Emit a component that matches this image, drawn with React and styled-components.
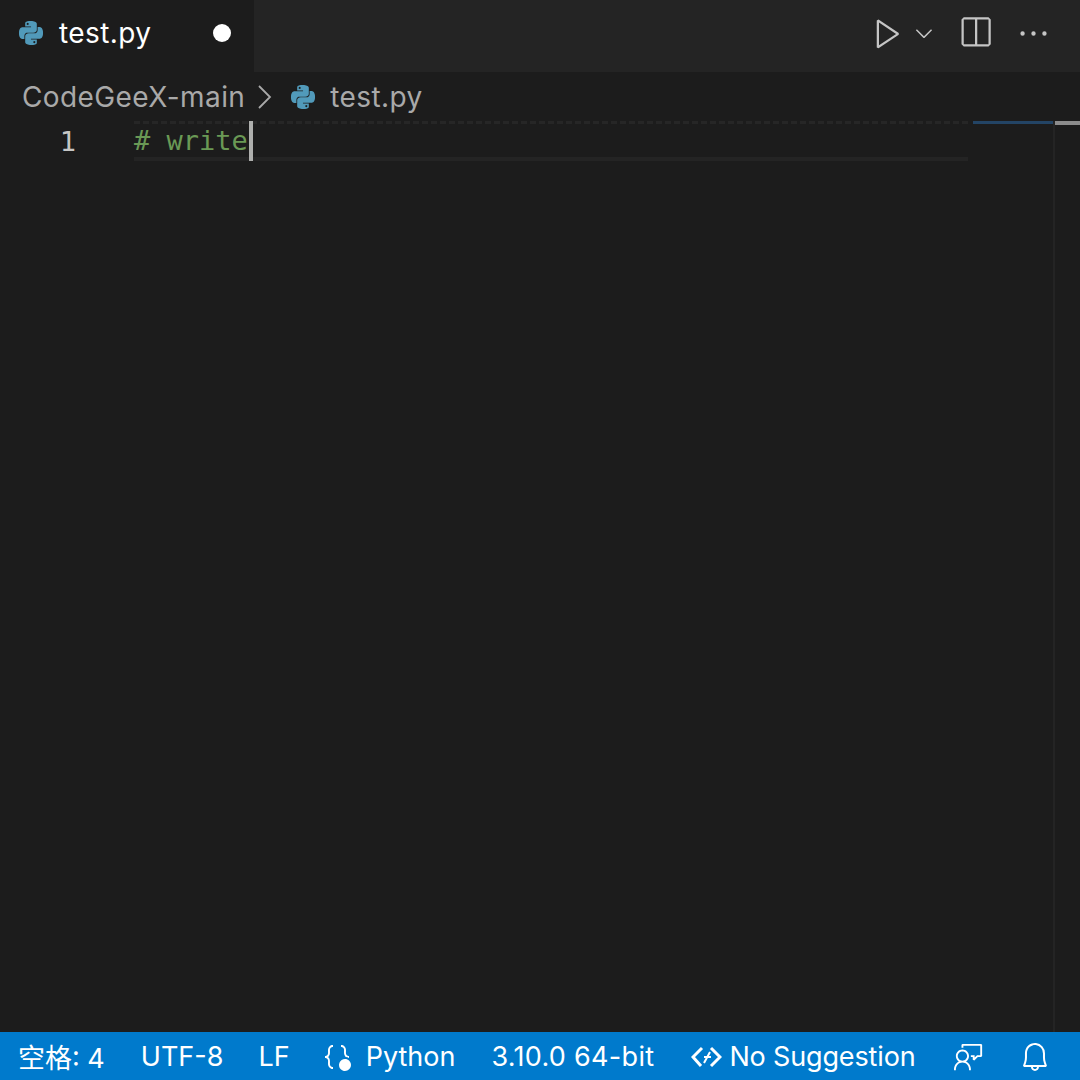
import React from "react";
import styled, { createGlobalStyle } from "styled-components";
import { SiPython } from "react-icons/si";
import {
  VscPlay,
  VscChevronDown,
  VscSplitHorizontal,
  VscEllipsis,
  VscBracketDot,
  VscFeedback,
  VscBell,
} from "react-icons/vsc";

const GlobalStyle = createGlobalStyle`
  html, body {
    margin: 0;
    padding: 0;
    background: #1c1c1c;
  }
  * {
    box-sizing: border-box;
  }
`;

const Window = styled.div`
  width: 1080px;
  height: 1080px;
  display: flex;
  flex-direction: column;
  overflow: hidden;
  background: #1c1c1c;
  font-family: Inter, "Noto Sans CJK SC", sans-serif;
`;

const TabBar = styled.div`
  height: 72px;
  flex: none;
  display: flex;
  justify-content: space-between;
  background: #242424;
`;

const Tab = styled.div`
  width: 254px;
  display: flex;
  align-items: center;
  padding: 0 23px 6px 19px;
  background: #1c1c1c;
  color: #ffffff;
  font-size: 28px;
  letter-spacing: 0.4px;
`;

const FileName = styled.span`
  margin-left: ${(props) => props.$gap}px;
  flex: 1;
`;

const DirtyDot = styled.span`
  width: 18px;
  height: 18px;
  border-radius: 50%;
  background: #ffffff;
`;

const Actions = styled.div`
  display: flex;
  align-items: center;
  padding: 0 29px 6px 0;
  color: #c5c5c5;
`;

const ActionIcon = styled.span`
  display: flex;
  margin-left: ${(props) => props.$left || 0}px;
`;

const Breadcrumb = styled.div`
  height: 49px;
  flex: none;
  display: flex;
  align-items: center;
  padding: 0 0 0 22px;
  color: #a9a9a9;
  font-size: 28px;
  letter-spacing: 0.4px;
`;

const Separator = styled.svg`
  width: 16px;
  height: 26px;
  margin: 0 18px 0 12px;
`;

const Editor = styled.div`
  flex: 1;
  display: flex;
  min-height: 0;
`;

const Gutter = styled.div`
  width: 134px;
  flex: none;
  padding: 0 58px 0 0;
  height: 40px;
  display: flex;
  align-items: center;
  justify-content: flex-end;
  color: #c6c6c6;
  font-family: "DejaVu Sans Mono", monospace;
  font-size: 27px;
`;

const CodeArea = styled.div`
  width: 834px;
  flex: none;
`;

const CurrentLine = styled.div`
  height: 40px;
  display: flex;
  align-items: center;
  border-top: 3px dashed #262626;
  border-bottom: 4px solid #242424;
  color: #6a9955;
  font-family: "DejaVu Sans Mono", monospace;
  font-size: 27px;
  white-space: pre;
`;

const Cursor = styled.span`
  width: 4px;
  height: 40px;
  flex: none;
  background: #aeafad;
  margin-top: -3px;
  margin-bottom: -4px;
  margin-left: 1px;
`;

const Minimap = styled.div`
  width: 80px;
  flex: none;
  margin-left: 5px;
`;

const MinimapLine = styled.div`
  height: 3px;
  background: #264f78;
  opacity: 0.8;
`;

const ScrollTrack = styled.div`
  flex: 1;
  border-left: 2px solid #242424;
`;

const ScrollThumb = styled.div`
  height: 4px;
  background: #8c8c8c;
`;

const StatusBar = styled.div`
  height: 48px;
  flex: none;
  display: flex;
  align-items: center;
  padding: 1px 32px 0 18px;
  background: #007acc;
  color: #ffffff;
  font-size: 27px;
  white-space: nowrap;
`;

const StatusItem = styled.span`
  display: flex;
  align-items: center;
  margin-left: ${(props) => props.$left || 0}px;
  letter-spacing: ${(props) => props.$spacing || 0}px;
`;

const App = () => {
  return (
    <Window>
      <GlobalStyle />
      <TabBar>
        <Tab>
          <SiPython size={24} color="#519aba" />
          <FileName $gap={16}>test.py</FileName>
          <DirtyDot />
        </Tab>
        <Actions>
          <ActionIcon>
            <VscPlay size={36} />
          </ActionIcon>
          <ActionIcon $left={5}>
            <VscChevronDown size={26} />
          </ActionIcon>
          <ActionIcon $left={20}>
            <VscSplitHorizontal size={36} />
          </ActionIcon>
          <ActionIcon $left={23}>
            <VscEllipsis size={35} />
          </ActionIcon>
        </Actions>
      </TabBar>
      <Breadcrumb>
        CodeGeeX-main
        <Separator viewBox="0 0 16 26" fill="none" stroke="#a9a9a9" strokeWidth="1.8">
          <path d="M2 2l11 11L2 24" />
        </Separator>
        <SiPython size={24} color="#519aba" />
        <FileName $gap={15}>test.py</FileName>
      </Breadcrumb>
      <Editor>
        <Gutter>1</Gutter>
        <CodeArea>
          <CurrentLine>
            # write
            <Cursor />
          </CurrentLine>
        </CodeArea>
        <Minimap>
          <MinimapLine />
        </Minimap>
        <ScrollTrack>
          <ScrollThumb />
        </ScrollTrack>
      </Editor>
      <StatusBar>
        <StatusItem>空格: 4</StatusItem>
        <StatusItem $left={36}>UTF-8</StatusItem>
        <StatusItem $left={35}>LF</StatusItem>
        <StatusItem $left={31}>
          <VscBracketDot size={32} />
        </StatusItem>
        <StatusItem $left={13}>Python</StatusItem>
        <StatusItem $left={36} $spacing={0.3}>3.10.0 64-bit</StatusItem>
        <StatusItem $left={37}>
          <svg width="31" height="24" viewBox="0 0 31 24" fill="none" stroke="#fff" strokeWidth="3">
            <path d="M11 3L2 12l8 9" />
            <path d="M20 3l9 9-9 9" />
            <path d="M19 7l-6 11M13 12h7" strokeWidth="2" />
          </svg>
        </StatusItem>
        <StatusItem $left={7} $spacing={-0.15}>No Suggestion</StatusItem>
        <StatusItem $left={39}>
          <VscFeedback size={30} />
        </StatusItem>
        <StatusItem $left={35}>
          <VscBell size={32} />
        </StatusItem>
      </StatusBar>
    </Window>
  );
};

export default App;
